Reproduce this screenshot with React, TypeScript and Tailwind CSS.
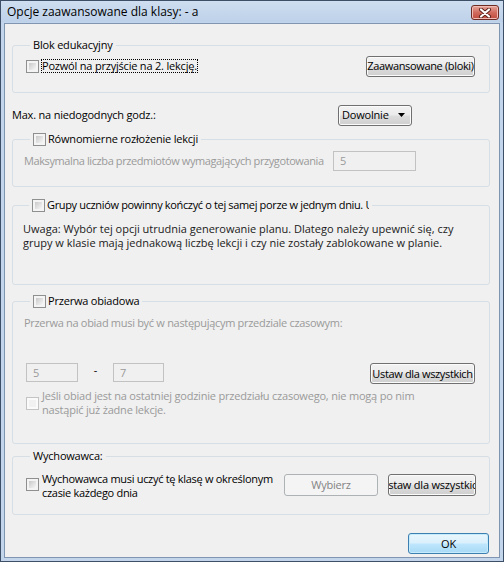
import React from 'react';

const Checkbox: React.FC<{ disabled?: boolean }> = ({ disabled }) => (
  <span
    className={
      disabled
        ? 'flex h-[13px] w-[13px] shrink-0 border border-[#c4c4c4] bg-[#fafafa] p-[2px]'
        : 'flex h-[13px] w-[13px] shrink-0 border border-[#8e8f8f] bg-[#f4f4f4] p-[2px]'
    }
  >
    <span
      className={
        disabled
          ? 'flex-1 bg-[#f1f1f1]'
          : 'flex-1 bg-linear-to-br from-[#c9c9c9] to-[#f7f7f7]'
      }
    />
  </span>
);

const Button: React.FC<{ className?: string; children: React.ReactNode }> = ({ className = '', children }) => (
  <div
    className={`flex shrink-0 items-center justify-center overflow-hidden whitespace-nowrap rounded-[3px] border border-[#707070] bg-[linear-gradient(#f2f2f2_0%,#ebebeb_48%,#dddddd_52%,#cfcfcf_100%)] tracking-[-0.35px] text-black shadow-[inset_0_0_0_1px_#fbfbfb] ${className}`}
  >
    {children}
  </div>
);

const DisabledInput: React.FC<{ value: string; className?: string }> = ({ value, className = '' }) => (
  <div className={`flex shrink-0 items-center border border-[#c2c2c2] bg-[#f0f0f0] pl-[6px] text-[#9a9a9a] ${className}`}>
    {value}
  </div>
);

const App: React.FC = () => {
  return (
    <div className="flex h-[562px] w-[504px] flex-col border border-[#3d4f66] bg-[#c2d5eb] font-['Open_Sans',sans-serif] text-[11px] leading-[14px] tracking-[-0.2px] text-black">
      {/* title bar */}
      <div className="flex h-[21px] items-start bg-linear-to-b from-[#cfdef0] to-[#bdd1e9] pl-[6px] pr-[4px]">
        <span className="pt-[3px] text-[12px] leading-[15px] tracking-normal">Opcje zaawansowane dla klasy: - a</span>
        <div className="ml-auto mt-[4px] flex h-[15px] w-[28px] items-center justify-center rounded-[3px] border border-[#6e2b24] bg-linear-to-b from-[#e6a59c] via-[#d16b5e] to-[#c04a3c] shadow-[inset_0_0_0_1px_#efbdb5]">
          <svg width="14" height="10" viewBox="0 0 14 10">
            <path d="M3 1.5 L11 8.5 M11 1.5 L3 8.5" stroke="#5a2019" strokeWidth="4" strokeLinecap="round" />
            <path d="M3 1.5 L11 8.5 M11 1.5 L3 8.5" stroke="#ffffff" strokeWidth="2.2" strokeLinecap="round" />
          </svg>
        </div>
      </div>

      {/* client area */}
      <div className="mx-[3px] mb-[3px] mt-[1px] flex flex-1 flex-col border border-[#7f95b1] bg-[#f0f0f0] pl-[7px]">
        {/* Blok edukacyjny */}
        <fieldset className="mt-[14px] w-[478px] rounded-[3px] border border-[#d5dfe5] pb-[16px] pl-[13px] pr-[14px] pt-[4px]">
          <legend className="ml-[4px] px-[3px]">Blok edukacyjny</legend>
          <div className="flex h-[20px] items-center justify-between">
            <div className="flex items-center gap-[2px]">
              <Checkbox />
              <span className="border border-dotted border-black leading-[12px]">Pozwól na przyjście na 2. lekcję.</span>
            </div>
            <Button className="h-[21px] w-[109px]">Zaawansowane (bloki)</Button>
          </div>
        </fieldset>

        {/* Max. na niedogodnych */}
        <div className="mt-[12px] flex h-[20px] items-center">
          <span className="w-[326px]">Max. na niedogodnych godz.:</span>
          <Button className="h-[21px] w-[74px] !justify-between pl-[3px] pr-[6px] !tracking-[-0.2px]">
            <span>Dowolnie</span>
            <svg width="7" height="4" viewBox="0 0 7 4">
              <path d="M0 0 H7 L3.5 4 Z" fill="#000" />
            </svg>
          </Button>
        </div>

        {/* Równomierne rozłożenie */}
        <fieldset className="mt-[7px] w-[478px] rounded-[3px] border border-[#d5dfe5] pb-[15px] pl-[11px] pt-[5px]">
          <legend className="ml-[6px] px-[3px]">
            <span className="flex items-center gap-[2px]">
              <Checkbox />
              <span>Równomierne rozłożenie lekcji</span>
            </span>
          </legend>
          <div className="flex h-[20px] items-center text-[#9a9a9a]">
            <span className="w-[309px] whitespace-nowrap tracking-[-0.4px]">
              Maksymalna liczba przedmiotów wymagających przygotowania
            </span>
            <DisabledInput value="5" className="h-[20px] w-[83px]" />
          </div>
        </fieldset>

        {/* Grupy uczniów */}
        <fieldset className="mt-[11px] w-[478px] rounded-[3px] border border-[#d5dfe5] pb-[34px] pl-[10px] pt-[10px]">
          <legend className="ml-[6px] px-[3px]">
            <span className="flex items-center gap-[2px]">
              <Checkbox />
              <span className="w-[322px] overflow-hidden whitespace-nowrap tracking-[-0.35px]">
                Grupy uczniów powinny kończyć o tej samej porze w jednym dniu. Uczniowie
              </span>
            </span>
          </legend>
          <p className="whitespace-nowrap tracking-normal text-[#1a1a1a]">
            Uwaga: Wybór tej opcji utrudnia generowanie planu. Dlatego należy upewnić się, czy
            <br />
            grupy w klasie mają jednakową liczbę lekcji i czy nie zostały zablokowane w planie.
          </p>
        </fieldset>

        {/* Przerwa obiadowa */}
        <fieldset className="mt-[9px] w-[478px] rounded-[3px] border border-[#d5dfe5] pb-[26px] pl-[11px] pr-[14px] pt-[8px]">
          <legend className="ml-[6px] px-[3px]">
            <span className="flex items-center gap-[2px]">
              <Checkbox />
              <span>Przerwa obiadowa</span>
            </span>
          </legend>
          <p className="whitespace-nowrap tracking-[-0.3px] text-[#9a9a9a]">
            Przerwa na obiad musi być w następującym przedziale czasowym:
          </p>
          <div className="ml-[2px] mt-[33px] flex h-[20px] items-start">
            <DisabledInput value="5" className="h-[19px] w-[52px]" />
            <span className="w-[35px] text-center">-</span>
            <DisabledInput value="7" className="h-[19px] w-[51px]" />
            <Button className="ml-auto h-[21px] w-[105px]">Ustaw dla wszystkich</Button>
          </div>
          <div className="ml-[2px] mt-[6px] flex items-start gap-[3px] text-[#9a9a9a]">
            <span className="mt-[8px]">
              <Checkbox disabled />
            </span>
            <p className="whitespace-nowrap">
              Jeśli obiad jest na ostatniej godzinie przedziału czasowego, nie mogą po nim
              <br />
              nastąpić już żadne lekcje.
            </p>
          </div>
        </fieldset>

        {/* Wychowawca */}
        <fieldset className="mt-[5px] w-[478px] rounded-[3px] border border-[#d5dfe5] pb-[14px] pl-[13px] pt-[9px]">
          <legend className="ml-[4px] px-[3px]">Wychowawca:</legend>
          <div className="flex items-start">
            <span className="mt-[6px]">
              <Checkbox />
            </span>
            <p className="ml-[3px] w-[229px] whitespace-nowrap tracking-[-0.3px]">
              Wychowawca musi uczyć tę klasę w określonym
              <br />
              czasie każdego dnia
            </p>
            <div className="ml-[13px] mt-[2px] flex h-[22px] w-[94px] items-center justify-center rounded-[3px] border border-[#adb2b5] bg-[#f4f4f4] text-[#838383]">
              Wybierz
            </div>
            <Button className="ml-[10px] mt-[2px] h-[22px] w-[88px] !tracking-[-0.2px]">Ustaw dla wszystkich</Button>
          </div>
        </fieldset>

        {/* OK */}
        <div className="mt-[18px] flex w-[478px] justify-end pr-[1px]">
          <div className="flex h-[21px] w-[81px] items-center justify-center rounded-[3px] border border-[#3c7fb1] bg-[linear-gradient(#eaf6fd_0%,#d9f0fc_48%,#bee6fd_52%,#a7d9f5_100%)] shadow-[inset_0_0_0_1px_#c6ecfb]">
            OK
          </div>
        </div>
      </div>
    </div>
  );
};

export default App;
